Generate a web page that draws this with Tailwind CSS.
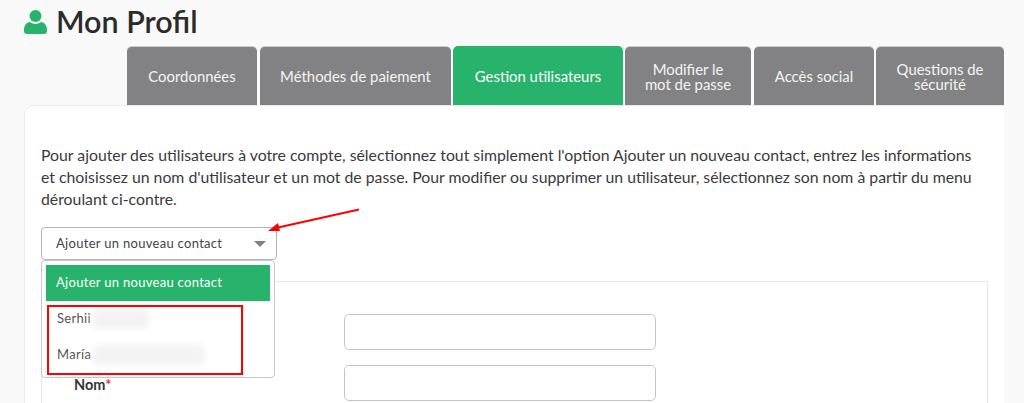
<!DOCTYPE html>
<html lang="fr">
<head>
<meta charset="utf-8">
<script src="https://cdn.jsdelivr.net/npm/@tailwindcss/browser@4"></script>
</head>
<body class="relative h-[403px] w-[1024px] overflow-hidden bg-[#f9f9f9] font-['Lato',sans-serif] text-[#333]">
<div class="ml-6 w-[980px]">
  <h1 class="flex h-[46px] items-center gap-[9px] pb-[3px] text-[30.5px] font-semibold leading-none text-[#2b2b2b]">
    <svg class="h-6 w-[23px]" viewBox="0 0 23 24" fill="#27b36b"><circle cx="11.5" cy="6" r="6"/><path d="M0 20c0-5 3-8 6-8 1.500 1.200 3.500 2 5.500 2s4-.8 5.500-2c3 0 6 3 6 8v1c0 1.700-1.300 3-3 3H3c-1.700 0-3-1.300-3-3z"/></svg>
    Mon Profil
  </h1>
  <div class="ml-[103px] flex h-[60px] text-center text-[14.9px] leading-[15px] text-[#f4f4f4]">
    <div class="flex w-[130px] items-center justify-center rounded-t-[5px] border-t border-[#ccc] bg-[#828284]">Coordonnées</div>
    <div class="ml-[3px] flex w-[191px] items-center justify-center rounded-t-[5px] border-t border-[#ccc] bg-[#828284]">Méthodes de paiement</div>
    <div class="ml-[2px] flex w-[170px] items-center justify-center rounded-t-[5px] bg-[#27b36b] text-white">Gestion utilisateurs</div>
    <div class="ml-[2px] flex w-[126px] items-center justify-center rounded-t-[5px] border-t border-[#ccc] bg-[#828284]">Modifier le<br>mot de passe</div>
    <div class="ml-[3px] flex w-[120px] items-center justify-center rounded-t-[5px] border-t border-[#ccc] bg-[#828284]">Accès social</div>
    <div class="ml-[2px] flex w-[128px] items-center justify-center rounded-t-[5px] border-t border-[#ccc] bg-[#828284]">Questions de<br>sécurité</div>
  </div>
  <main class="relative -mt-px h-[298px] overflow-hidden rounded-tl-[10px] border-l border-t border-[#ebebeb] bg-white pl-4 pr-4 pt-[38px]">
    <p class="w-[945px] text-[15.8px] leading-[22px] text-[#3a3a3a]">Pour ajouter des utilisateurs à votre compte, sélectionnez tout simplement l'option Ajouter un nouveau contact, entrez les informations et choisissez un nom d'utilisateur et un mot de passe. Pour modifier ou supprimer un utilisateur, sélectionnez son nom à partir du menu déroulant ci-contre.</p>
    <div class="mt-[17px] flex h-[33px] w-[236px] items-center justify-between rounded-[4px] border border-[#b5b5b5] bg-white pl-[14px] pr-[10px] text-[13px] tracking-[0.3px] text-[#444]">
      Ajouter un nouveau contact
      <span class="h-0 w-0 border-x-[6px] border-t-[6px] border-x-transparent border-t-[#808080]"></span>
    </div>
    <div class="mt-[21px] h-[200px] w-[947px] border border-[#e6e6e6] pl-[32px] pt-[93px]">
      <div class="text-[14.5px] font-bold leading-5 text-[#333]">Nom<span class="text-[#e33]">*</span></div>
    </div>
    <div class="absolute left-[319px] top-[208px] flex flex-col gap-[15px]">
      <div class="h-9 w-[312px] rounded-[5px] border border-[#c4c4c4] bg-white"></div>
      <div class="h-9 w-[312px] rounded-[5px] border border-[#c4c4c4] bg-white"></div>
    </div>
    <div class="absolute left-[16px] top-[154px] h-[118px] w-[234px] rounded-[4px] border border-[#c8c8c8] bg-white p-1 text-[13px] tracking-[0.3px]">
      <div class="flex h-9 items-center bg-[#27b36b] pl-[10px] text-white">Ajouter un nouveau contact</div>
      <div class="flex h-9 items-center pl-[11px] text-[#555]">Serhii<span class="ml-0.5 h-5 w-[56px] rounded-sm bg-[#f3f3f3] blur-[3px]"></span></div>
      <div class="flex h-9 items-center pl-[11px] text-[#555]">María<span class="ml-0.5 h-5 w-[112px] rounded-sm bg-[#f3f3f3] blur-[3px]"></span></div>
    </div>
    <div class="absolute left-[22px] top-[199px] h-[70px] w-[196px] border-2 border-[#f00]"></div>
  </main>
</div>
<svg class="absolute left-[260px] top-[200px] h-[40px] w-[110px]" viewBox="0 0 110 40" fill="#f00"><path d="M99 9.500 18 27.500" stroke="#f00" stroke-width="2" fill="none"/><path d="M8 31l10-8 2 8z"/></svg>
</body>
</html>
